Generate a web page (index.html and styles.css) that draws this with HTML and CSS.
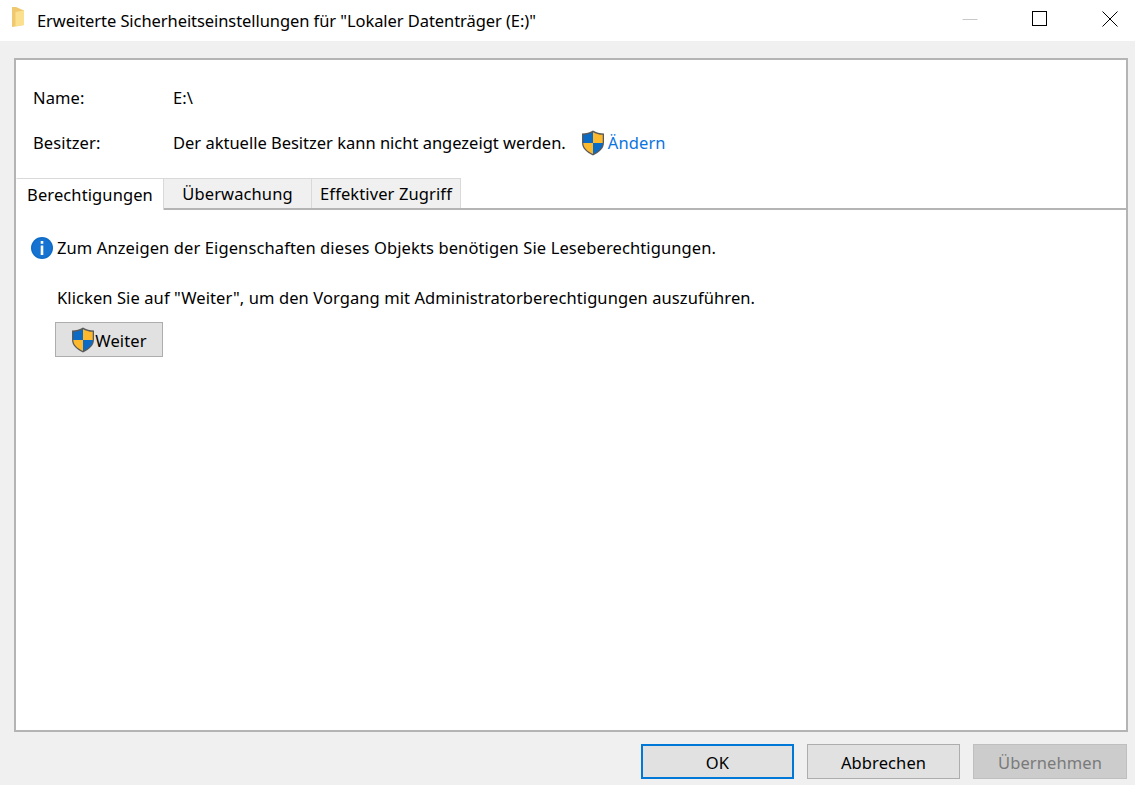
FILE: index.html
```html
<!DOCTYPE html>
<html lang="de">
<head>
<meta charset="utf-8">
<title>Erweiterte Sicherheitseinstellungen</title>
<link rel="stylesheet" href="styles.css">
</head>
<body>
<svg class="defs" width="0" height="0" aria-hidden="true">
  <defs>
    <symbol id="shield" viewBox="0 0 24 26">
      <path d="M12 .6C9 2.6 5 3.6 1 3.6v9c0 6 4.500 10 11 12.800 6.500-2.800 11-6.800 11-12.800v-9C19 3.600 15 2.600 12 .6z" fill="#5a5a5a"/>
      <path d="M12 2.200V13H2.300V4.800C6 4.700 9.300 3.800 12 2.200z" fill="#0a6ac4"/>
      <path d="M12 2.200V13h9.700V4.800C18 4.700 14.700 3.800 12 2.200z" fill="#fdb92e"/>
      <path d="M12 13H2.300c.2 5 4 8.300 9.700 10.900V13z" fill="#fdb92e"/>
      <path d="M12 13h9.700c-.2 5-4 8.300-9.700 10.900V13z" fill="#0a6ac4"/>
    </symbol>
  </defs>
</svg>
<header class="titlebar">
  <div class="title-left">
    <svg class="folder" width="16" height="22" viewBox="0 0 16 22"><path d="M1 0h4l8 3.500v14.500l-9 1.500-3 .5z" fill="#f0c870"/><path d="M4.500 5 13 3.500V18l-8.500 1.500z" fill="#fbe08f"/></svg>
    <span class="title-text">Erweiterte Sicherheitseinstellungen für "Lokaler Datenträger (E:)"</span>
  </div>
  <div class="win-controls">
    <svg width="16" height="16" viewBox="0 0 16 16"><path d="M.5 8.500h15" stroke="#c8c8c8" fill="none"/></svg>
    <svg width="16" height="16" viewBox="0 0 16 16"><rect x=".5" y=".5" width="14" height="14" stroke="#000" fill="none"/></svg>
    <svg width="16" height="16" viewBox="0 0 16 16"><path d="M.5.500l15 15M15.500.500l-15 15" stroke="#000" fill="none"/></svg>
  </div>
</header>
<main class="content">
  <section class="panel">
    <div class="info">
      <div class="info-row info-name"><span class="label">Name:</span><span>E:\</span></div>
      <div class="info-row"><span class="label">Besitzer:</span><span class="owner-text">Der aktuelle Besitzer kann nicht angezeigt werden.</span>
        <svg class="shield owner-shield"><use href="#shield"/></svg><a class="link">Ändern</a></div>
    </div>
    <nav class="tabs">
      <span class="tab active">Berechtigungen</span>
      <span class="tab tab-mid">Überwachung</span>
      <span class="tab tab-last">Effektiver Zugriff</span>
    </nav>
    <div class="tab-body">
      <div class="notice">
        <svg class="info-icon" width="22" height="22" viewBox="0 0 22 22"><circle cx="11" cy="11" r="11" fill="#0f6cc6"/><circle cx="11" cy="11" r="9.500" fill="#1673d1"/><rect x="9.700" y="4" width="2.600" height="2.800" fill="#fff"/><rect x="9.700" y="8.500" width="2.600" height="9.500" fill="#fff"/></svg>
        <span>Zum Anzeigen der Eigenschaften dieses Objekts benötigen Sie Leseberechtigungen.</span>
      </div>
      <p class="hint">Klicken Sie auf "Weiter", um den Vorgang mit Administratorberechtigungen auszuführen.</p>
      <button class="btn btn-continue"><svg class="shield"><use href="#shield"/></svg>Weiter</button>
    </div>
  </section>
  <footer class="actions">
    <button class="btn btn-action btn-default">OK</button>
    <button class="btn btn-action">Abbrechen</button>
    <button class="btn btn-action btn-disabled">Übernehmen</button>
  </footer>
</main>
</body>
</html>
```

FILE: styles.css
```css
* { box-sizing: border-box; }
html, body { height: 100%; }
body {
  margin: 0;
  height: 785px;
  overflow: hidden;
  display: flex;
  flex-direction: column;
  background: #f0f0f0;
  color: #000;
  font: 16.5px/22px "Noto Sans", "Open Sans", sans-serif;
  letter-spacing: 0.11px;
}
.defs { position: absolute; }
.titlebar {
  height: 41px;
  flex: none;
  background: #fff;
  display: flex;
  justify-content: space-between;
  align-items: center;
}
.title-left { display: flex; align-items: center; padding-left: 11px; }
.title-text { letter-spacing: -0.07px; }
.folder { margin-top: -6px; margin-right: 10px; }
.win-controls { display: flex; gap: 54px; padding-right: 17px; margin-top: -4px; }
.content { flex: 1; padding: 17px 7px 7px 14px; display: flex; flex-direction: column; }
.panel {
  height: 674px;
  border: 2px solid #b4b4b4;
  background: #fff;
  display: flex;
  flex-direction: column;
}
.info { padding: 26px 0 0 17px; height: 118px; }
.info-row { display: flex; align-items: center; height: 24px; }
.info-name { margin-bottom: 21px; }
.label { width: 140px; }
.owner-text { letter-spacing: -0.01px; }
.shield { width: 24px; height: 26px; flex: none; }
.owner-shield { margin-left: 15px; margin-right: 3px; }
.link { color: #0a74e0; }
.tabs { display: flex; height: 32px; border-bottom: 2px solid #b4b4b4; align-items: flex-end; }
.tab {
  height: 30px;
  background: #f0f0f0;
  border: 1px solid #d9d9d9;
  border-bottom: 0;
  text-align: center;
  line-height: 29px;
}
.active {
  width: 148px;
  height: 32px;
  background: #fff;
  margin-bottom: -2px;
  border-left-color: #fff;
  line-height: 32px;
  position: relative;
}
.tab-mid { width: 148px; border-left: 0; }
.tab-last { width: 149px; border-left: 0; }
.tab-body { flex: 1; padding: 27px 0 0 15px; }
.notice { display: flex; align-items: center; gap: 4px; height: 22px; }
.hint { margin: 28px 0 0 26px; letter-spacing: 0.09px; }
.btn {
  font: inherit;
  letter-spacing: inherit;
  color: #000;
  background: #e1e1e1;
  border: 1px solid #adadad;
  padding: 2px 0 0;
  display: flex;
  align-items: center;
  justify-content: center;
}
.btn .shield { margin-top: -2px; }
.btn-continue { width: 108px; height: 35px; margin: 13px 0 0 24px; }
.actions { display: flex; justify-content: flex-end; gap: 13px; padding: 12px 1px 0 0; }
.btn-action { width: 153px; height: 35px; }
.btn-default { border: 2px solid #0078d7; }
.btn-disabled { width: 154px; background: #cccccc; border-color: #bfbfbf; color: #7a7a7a; }
```
